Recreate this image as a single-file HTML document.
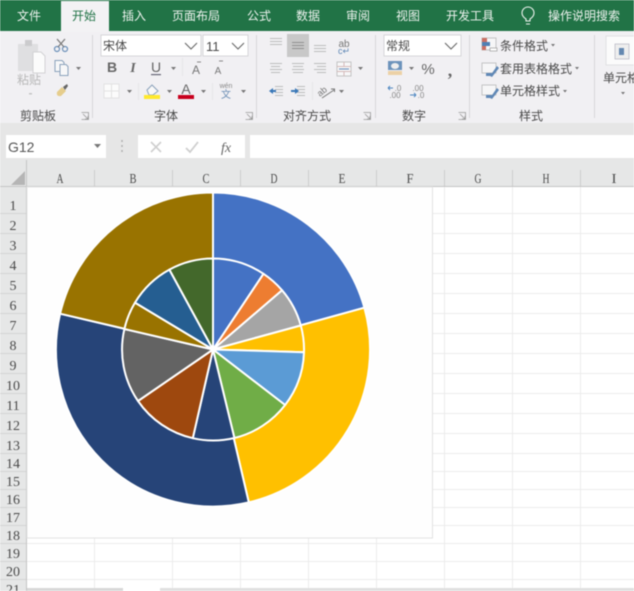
<!DOCTYPE html>
<html><head><meta charset="utf-8">
<style>
html,body{margin:0;padding:0;background:#fff;width:634px;height:591px;overflow:hidden}
svg{display:block;filter:blur(.5px)}
text{font-family:"Liberation Sans","Noto Sans CJK SC",sans-serif;font-size:12px;fill:#4a4a4a}
.tab{fill:#eef3ef;text-anchor:middle}
.lbl{text-anchor:middle;fill:#4a4a4a}
.h{font-family:"Liberation Serif","Noto Serif CJK SC",serif;font-size:14px;fill:#4a4a4a;text-anchor:middle}
.r{font-family:"Liberation Serif","Noto Serif CJK SC",serif;font-size:14px;fill:#4a4a4a;text-anchor:middle}
.dd{fill:#777}
</style></head><body>
<svg width="634" height="591" viewBox="0 0 634 591" xmlns="http://www.w3.org/2000/svg">
<!-- top bar -->
<rect width="634" height="31" fill="#217346"/>
<rect y="31" width="634" height="92" fill="#f1f0f3"/>
<rect x="61" y="1" width="48" height="31" fill="#f3f2f4"/>
<text class="tab" x="29" y="20">文件</text>
<text class="tab" x="84" y="20" style="fill:#217346">开始</text>
<text class="tab" x="134" y="20">插入</text>
<text class="tab" x="196" y="20">页面布局</text>
<text class="tab" x="259" y="20">公式</text>
<text class="tab" x="308" y="20">数据</text>
<text class="tab" x="358" y="20">审阅</text>
<text class="tab" x="408" y="20">视图</text>
<text class="tab" x="470" y="20">开发工具</text>
<text class="tab" x="584" y="20">操作说明搜索</text>
<path d="M526 19c-3-2-4-4-4-6a6 6 0 0 1 12 0c0 2-1 4-4 6v2h-4zM526 24h4" fill="none" stroke="#eef3ef" stroke-width="1.100"/>

<!-- separators -->
<g stroke="#d8d7da"><path d="M92.500 35V118M256.500 35V118M375.500 35V118M469.500 35V118M594.500 35V118"/></g>

<!-- clipboard -->
<rect x="18" y="44" width="20" height="27" fill="#dfdfe1"/>
<rect x="25" y="40" width="7" height="6" fill="#cbcbcd"/>
<path d="M33 52h8l4 4v17H33z" fill="#fbfbfb" stroke="#d2d2d4"/>
<text x="29" y="84" class="lbl" style="fill:#b8b8b8">粘贴</text>
<rect x="29" y="93" width="3" height="1.500" fill="#c4c4c4"/>
<g fill="none" stroke-width="1.200"><circle cx="57" cy="49" r="2.500" stroke="#6a8fb8"/><circle cx="65" cy="49" r="2.500" stroke="#6a8fb8"/><path d="M58 47 65 39M64 47 57 39" stroke="#777"/></g>
<g fill="#f7f7f8" stroke="#8ba2bb"><path d="M55 60.500h7l2 2v9h-9z"/><path d="M60 64.500h6l2 2v9h-8z"/></g>
<path d="M76 67h5l-2.500 3z" class="dd"/>
<path d="M57 92 62 87 66 91 61 96Q56 97 57 92Z" fill="#e6cd8c"/><path d="M63 87 67 84 68 86 65 90z" fill="#666"/>
<text class="lbl" x="38" y="120">剪贴板</text>
<path d="M81.500 112.500h7v7h-7M83 114l5 5M88 116v3h-3" fill="none" stroke="#999" stroke-width=".8"/>

<!-- font -->
<rect x="101" y="35" width="100" height="21" fill="#fff" stroke="#d6d6d9"/>
<rect x="203" y="35" width="45" height="21" fill="#fff" stroke="#d6d6d9"/>
<text x="103" y="50">宋体</text>
<text x="206" y="51" style="font-size:13px">11</text>
<path d="M185 43l6 6 6-6M232 43l6 6 6-6" fill="none" stroke="#666" stroke-width="1.100"/>
<text x="112" y="72" text-anchor="middle" style="font-size:14px;font-weight:bold;fill:#666">B</text>
<text x="133" y="72" text-anchor="middle" style="font-size:14px;font-style:italic;font-weight:bold;fill:#666;font-family:'Liberation Serif',serif">I</text>
<text x="156" y="72" text-anchor="middle" style="font-size:14px;fill:#666">U</text>
<rect x="151" y="74" width="10" height="1.200" fill="#667"/>
<path d="M171 67h5l-2.500 3z" class="dd"/>
<text x="196" y="74" text-anchor="middle" style="font-size:12px;fill:#777">A</text>
<text x="218" y="74" text-anchor="middle" style="font-size:10px;fill:#777">A</text>
<path d="M197 62h4M219 61h4" stroke="#888"/>
<rect x="104" y="84" width="15" height="14" fill="#fbfbfb" stroke="#e2e2e2"/><path d="M111.500 84V98M104 91H119" stroke="#e2e2e2"/>
<path d="M127 90h5l-2.500 3zM167 90h5l-2.500 3zM201 90h5l-2.500 3zM241 90h5l-2.500 3z" class="dd"/>
<path d="M147 90 152 85 158 91 153 95H149Z" fill="#f8f8f8" stroke="#8ba2bb"/>
<rect x="144" y="95" width="16" height="4" fill="#ffe92e"/>
<text x="186" y="94" text-anchor="middle" style="font-size:14px;fill:#666">A</text>
<rect x="178" y="95" width="16" height="4" fill="#c8001d"/>
<text x="226" y="88" text-anchor="middle" style="font-size:7px;fill:#888">wén</text>
<text x="226" y="98" text-anchor="middle" style="font-size:10px;fill:#6e90b6">文</text>
<g stroke="#e6e5e8"><path d="M182.500 58V76M138.500 83V100M212.500 83V100"/></g>
<text class="lbl" x="166" y="120">字体</text>
<path d="M245.500 112.500h7v7h-7M247 114l5 5M252 116v3h-3" fill="none" stroke="#999" stroke-width=".8"/>

<!-- alignment -->
<rect x="287" y="34" width="22" height="23" fill="#c8c8c8"/>
<g stroke="#bcbcbc" stroke-width="1">
<path d="M270 38.500h12M270 41.500h12M270 44.500h12"/>
<path d="M292 42.500h12M292 45.500h12M292 48.500h12" stroke="#8f8f8f"/>
<path d="M314 45.500h12M314 48.500h12M314 51.500h12"/>
<path d="M270 63.500h12M271 66.500h9M270 69.500h12M271 72.500h9"/>
<path d="M292 63.500h12M293 66.500h10M292 69.500h12M293 72.500h10"/>
<path d="M314 63.500h12M317 66.500h9M314 69.500h12M317 72.500h9"/>
<path d="M275 86.500h8M275 89.500h8M275 92.500h8M275 95.500h8M297 86.500h8M297 89.500h8M297 92.500h8M297 95.500h8"/>
</g>
<path d="M269 91 273 88V94ZM295 88 299 91 295 94Z" fill="#3a78b8"/>
<rect x="273" y="90" width="3" height="2" fill="#3a78b8"/><rect x="291" y="90" width="4" height="2" fill="#3a78b8"/>
<text x="344" y="47" text-anchor="middle" style="font-size:10px;fill:#777">ab</text>
<text x="344" y="54" text-anchor="middle" style="font-size:9px;fill:#6088b6">c↵</text>
<rect x="337" y="62" width="14" height="14" fill="#f7f7f8" stroke="#c4c4c4"/><path d="M337 66.500h14M337 71.500h14M344 62v4M344 72v4" stroke="#d4b9b9"/><path d="M339 69h10" stroke="#6088b6"/>
<path d="M358 67h5l-2.500 3zM339 90h5l-2.500 3z" class="dd"/>
<text x="320" y="97" transform="rotate(-40 320 97)" style="font-size:9px;fill:#777">ab</text>
<path d="M322 98 334 90M331 89h3.500v3" fill="none" stroke="#777"/>
<g stroke="#e6e5e8"><path d="M312.500 82V100"/></g>
<text class="lbl" x="307" y="120">对齐方式</text>
<path d="M363.500 112.500h7v7h-7M365 114l5 5M370 116v3h-3" fill="none" stroke="#999" stroke-width=".8"/>

<!-- number -->
<rect x="384" y="35" width="77" height="21" fill="#fff" stroke="#d6d6d9"/>
<text x="386" y="50">常规</text>
<path d="M445 43l6 6 6-6" fill="none" stroke="#666" stroke-width="1.100"/>
<rect x="388" y="61" width="14" height="9" fill="#6c93bb"/><ellipse cx="395" cy="66" rx="4" ry="3" fill="#eee"/><path d="M388 71h14v4h-14z" fill="#ecd1a6"/>
<path d="M409 67h5l-2.500 3z" class="dd"/>
<text x="428" y="74" text-anchor="middle" style="font-size:15px;fill:#666">%</text>
<text x="450" y="76" text-anchor="middle" style="font-size:18px;font-weight:bold;fill:#666;font-family:'Liberation Serif',serif">,</text>
<text x="398" y="91" text-anchor="middle" style="font-size:8px;fill:#888">.0</text>
<text x="395" y="98" text-anchor="middle" style="font-size:8px;fill:#888">.00</text>
<path d="M388 88h5M388 88l2-2M388 88l2 2" stroke="#4d86c0" fill="none"/>
<text x="418" y="91" text-anchor="middle" style="font-size:8px;fill:#888">.00</text>
<text x="421" y="98" text-anchor="middle" style="font-size:8px;fill:#888">.0</text>
<path d="M410 95h6M416 95l-2-2M416 95l-2 2" stroke="#4d86c0" fill="none"/>
<text class="lbl" x="414" y="120">数字</text>
<path d="M458.500 112.500h7v7h-7M460 114l5 5M465 116v3h-3" fill="none" stroke="#999" stroke-width=".8"/>

<!-- styles -->
<rect x="482" y="38" width="14" height="12" fill="#f6f6f7" stroke="#c4c4c4"/>
<rect x="482" y="38" width="5" height="4" fill="#cb6f63"/><rect x="482" y="42" width="8" height="4" fill="#5080b4"/><rect x="482" y="46" width="4" height="4" fill="#cb6f63"/>
<rect x="490" y="48" width="7" height="3" fill="#fff" stroke="#999" stroke-width=".7"/>
<text x="500" y="50">条件格式</text>
<path d="M551 44h4l-2 2.500z" class="dd"/>
<rect x="482" y="63" width="14" height="10" fill="#f6f6f7" stroke="#c4c4c4"/>
<path d="M490 76 497 66 499 68 492 77ZM486 73h6v3h-6z" fill="#6088b6"/>
<text x="500" y="73">套用表格格式</text>
<path d="M575 67h4l-2 2.500z" class="dd"/>
<rect x="482" y="85" width="14" height="10" fill="#f6f6f7" stroke="#c4c4c4"/>
<path d="M490 98 497 88 499 90 492 99ZM486 95h6v3h-6z" fill="#6088b6"/>
<text x="500" y="95">单元格样式</text>
<path d="M563 90h4l-2 2.500z" class="dd"/>
<text class="lbl" x="531" y="120">样式</text>

<!-- cells -->
<rect x="606" y="36" width="30" height="29" fill="#fbfbfb" stroke="#e0e0e2"/>
<rect x="615" y="44" width="14" height="15" fill="#eee" stroke="#b4b4c0" stroke-width=".7"/>
<rect x="619" y="48" width="5" height="7" fill="#6488b0"/>
<text x="603" y="82">单元格</text>
<path d="M621 92h4l-2 2.500z" class="dd"/>

<!-- formula bar -->
<rect y="123" width="634" height="37" fill="#e6e6e6"/>
<rect x="6" y="135" width="100" height="23" fill="#fff"/>
<text x="8" y="152" style="font-size:14px;fill:#555">G12</text>
<path d="M94 144h7l-3.500 4z" fill="#777"/>
<path d="M122 140v2M122 145v2M122 150v2" stroke="#b0b0b0" stroke-width="1.500"/>
<rect x="138" y="135" width="107" height="23" fill="#fff"/>
<path d="M151 142 161 152M161 142 151 152" stroke="#cfcfcf" stroke-width="1.600"/>
<path d="M186 148 190 152 198 142" fill="none" stroke="#cfcfcf" stroke-width="1.800"/>
<text x="221" y="152" style="font-family:'Liberation Serif',serif;font-style:italic;font-size:14px;fill:#666">fx</text>
<rect x="250" y="135" width="384" height="23" fill="#fff"/>

<!-- sheet -->
<rect y="160" width="634" height="27" fill="#e6e7e7"/>
<rect x="0" y="187" width="27" height="404" fill="#e6e7e7"/>
<rect x="27" y="187" width="607" height="404" fill="#fff"/>
<rect y="186" width="634" height="1" fill="#c4c4c4"/>
<rect x="26" y="160" width="1" height="431" fill="#c4c4c4"/>
<path d="M11 185 25 171V185Z" fill="#b5b5b5"/>
<g stroke="#cdcdcd"><path d="M94.500 170V186M172.500 170V186M240.500 170V186M308.500 170V186M376.500 170V186M444.500 170V186M512.500 170V186M580.500 170V186"/></g>
<text class="h" x="60" y="183" textLength="7" lengthAdjust="spacingAndGlyphs">A</text><text class="h" x="133" y="183" textLength="7" lengthAdjust="spacingAndGlyphs">B</text><text class="h" x="206" y="183" textLength="7" lengthAdjust="spacingAndGlyphs">C</text><text class="h" x="274" y="183" textLength="7" lengthAdjust="spacingAndGlyphs">D</text><text class="h" x="342" y="183" textLength="7" lengthAdjust="spacingAndGlyphs">E</text><text class="h" x="410" y="183" textLength="7" lengthAdjust="spacingAndGlyphs">F</text><text class="h" x="478" y="183" textLength="7" lengthAdjust="spacingAndGlyphs">G</text><text class="h" x="546" y="183" textLength="7" lengthAdjust="spacingAndGlyphs">H</text><text class="h" x="614" y="183" textLength="5" lengthAdjust="spacingAndGlyphs">I</text>
<!-- grid -->
<g stroke="#ececec">
<path d="M94.500 187V591M172.500 187V591M240.500 187V591M308.500 187V591M376.500 187V591M444.500 187V591M512.500 187V591M580.500 187V591"/>
<path d="M27 213.500H634M27 233.500H634M27 253.500H634M27 273.500H634M27 293.500H634M27 313.500H634M27 333.500H634M27 353.500H634M27 373.500H634M27 393.500H634M27 413.500H634M27 433.500H634M27 453.500H634M27 471.500H634M27 489.500H634M27 507.500H634M27 525.500H634M27 543.500H634M27 561.500H634M27 579.500H634"/>
</g>
<g stroke="#d4d4d4"><path d="M0 213.500H26M0 233.500H26M0 253.500H26M0 273.500H26M0 293.500H26M0 313.500H26M0 333.500H26M0 353.500H26M0 373.500H26M0 393.500H26M0 413.500H26M0 433.500H26M0 453.500H26M0 471.500H26M0 489.500H26M0 507.500H26M0 525.500H26M0 543.500H26M0 561.500H26M0 579.500H26"/></g>
<g>
<text class="r" x="13" y="210">1</text><text class="r" x="13" y="230">2</text><text class="r" x="13" y="250">3</text><text class="r" x="13" y="270">4</text><text class="r" x="13" y="290">5</text><text class="r" x="13" y="310">6</text><text class="r" x="13" y="330">7</text><text class="r" x="13" y="350">8</text><text class="r" x="13" y="370">9</text><text class="r" x="13" y="390">10</text><text class="r" x="13" y="410">11</text><text class="r" x="13" y="430">12</text><text class="r" x="13" y="450">13</text><text class="r" x="13" y="468">14</text><text class="r" x="13" y="486">15</text><text class="r" x="13" y="504">16</text><text class="r" x="13" y="522">17</text><text class="r" x="13" y="540">18</text><text class="r" x="13" y="558">19</text><text class="r" x="13" y="576">20</text><text class="r" x="13" y="594">21</text>
</g>

<!-- chart -->
<rect x="27" y="187" width="405.500" height="351" fill="#fefefe" stroke="#e2e2e2"/>
<g stroke="#fff" stroke-width="2" stroke-linejoin="round">
<path d="M213 349.500L213 192.500A157 157 0 0 1 364.400 307.700Z" fill="#4472c4"/>
<path d="M213 349.500L364.400 307.700A157 157 0 0 1 248.800 502.400Z" fill="#ffc000"/>
<path d="M213 349.500L248.800 502.400A157 157 0 0 1 60.100 313.700Z" fill="#264478"/>
<path d="M213 349.500L60.100 313.700A157 157 0 0 1 213 192.500Z" fill="#997300"/>
<path d="M213 349.500L213 258.500A91 91 0 0 1 263.500 273.800Z" fill="#4472c4"/>
<path d="M213 349.500L263.500 273.800A91 91 0 0 1 282.100 290.300Z" fill="#ed7d31"/>
<path d="M213 349.500L282.100 290.300A91 91 0 0 1 300.800 325.500Z" fill="#a5a5a5"/>
<path d="M213 349.500L300.800 325.500A91 91 0 0 1 304 352.200Z" fill="#ffc000"/>
<path d="M213 349.500L304 352.200A91 91 0 0 1 285.100 405Z" fill="#5b9bd5"/>
<path d="M213 349.500L285.100 405A91 91 0 0 1 234.400 438Z" fill="#70ad47"/>
<path d="M213 349.500L234.400 438A91 91 0 0 1 192.800 438.200Z" fill="#264478"/>
<path d="M213 349.500L192.800 438.200A91 91 0 0 1 138 401Z" fill="#9e480e"/>
<path d="M213 349.500L138 401A91 91 0 0 1 124.400 329Z" fill="#636363"/>
<path d="M213 349.500L124.400 329A91 91 0 0 1 135 302.600Z" fill="#997300"/>
<path d="M213 349.500L135 302.600A91 91 0 0 1 169.400 269.600Z" fill="#255e91"/>
<path d="M213 349.500L169.400 269.600A91 91 0 0 1 213 258.500Z" fill="#43682b"/>
</g>

<!-- bottom tabs strip -->
<rect x="27" y="588" width="96" height="3" fill="#d8d8d8"/>
<rect x="160" y="588" width="474" height="3" fill="#e0e0e0"/>
</svg>
</body></html>
